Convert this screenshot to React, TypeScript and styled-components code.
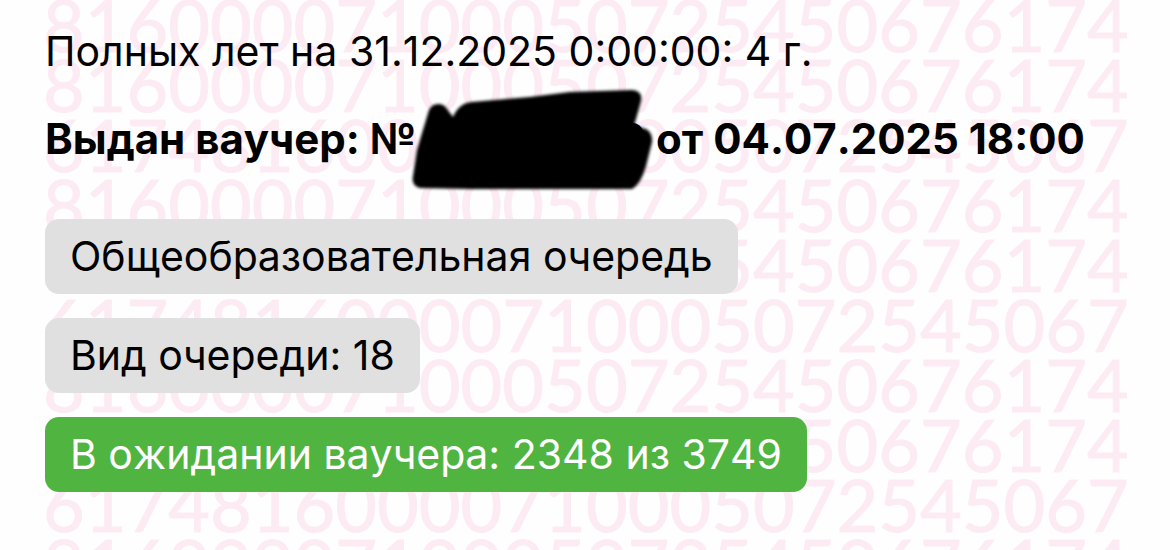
import React from "react";
import styled, { createGlobalStyle } from "styled-components";

const GlobalStyle = createGlobalStyle`
  * { box-sizing: border-box; }
  body {
    margin: 0;
    background: #fefefe;
    color: #000;
    font-family: Inter, "Liberation Sans", sans-serif;
  }
`;

const Page = styled.main`
  position: relative;
  overflow: hidden;
  min-height: 100vh;
  padding: 20px 45px 56px;
  font-size: 41px;
  font-kerning: none;
`;

const Watermark = styled.div`
  position: absolute;
  inset: -6px 43px 0;
  overflow: hidden;
  color: #fdebf4;
  -webkit-text-stroke: 1px #fdebf4;
  font-family: Lato, sans-serif;
  font-size: 72px;
  line-height: 60px;
  white-space: nowrap;
  user-select: none;
`;

const WatermarkRow = styled.div`
  height: 60px;
`;

const Content = styled.div`
  position: relative;
  display: flex;
  flex-direction: column;
  gap: 49px;
`;

const Stack = styled.div`
  display: flex;
  flex-direction: column;
  align-items: flex-start;
  gap: 24px;
`;

const Line = styled.p<{ $bold?: boolean }>`
  display: flex;
  margin: 0;
  font-size: ${(p) => (p.$bold ? 42 : 41)}px;
  font-weight: ${(p) => (p.$bold ? 700 : 400)};
  line-height: 63px;
  white-space: pre;
`;

const Hidden = styled.span`
  position: relative;
  width: 230px;
  text-align: right;
`;

const Scribble = styled.svg`
  position: absolute;
  left: -8px;
  top: -23px;
  width: 250px;
  height: 112px;
`;

const Chip = styled.div<{ $active?: boolean }>`
  padding: 5px 25px;
  border-radius: 14px;
  background: ${(p) => (p.$active ? "#50b440" : "#e0e0e0")};
  color: ${(p) => (p.$active ? "#fff" : "#000")};
  line-height: 65px;
`;

const LONG = "81600007100050725450676174";
const SHIFTED = "61748160000710005072545067";
const rows = Array.from({ length: 10 }, (_, i) => (i % 3 === 2 ? SHIFTED : LONG));

export default function App() {
  return (
    <Page>
      <GlobalStyle />
      <Watermark aria-hidden="true">
        {rows.map((digits, i) => (
          <WatermarkRow key={i}>{digits}</WatermarkRow>
        ))}
      </Watermark>
      <Content>
        <Stack>
          <Line>Полных лет на 31.12.2025 0:00:00: 4 г.</Line>
          <Line $bold>
            <span>Выдан ваучер: №</span>
            <Hidden>
              0
              <Scribble viewBox="408 84 250 112" aria-hidden="true">
                <defs>
                  <filter id="soft" x="-5%" y="-10%" width="110%" height="120%">
                    <feGaussianBlur stdDeviation="1.6" />
                  </filter>
                </defs>
                <path
                  filter="url(#soft)"
                  d="M429 110 Q432 104 438 104 Q444 104 447 109 L453 117 Q459 103 472 102 L530 97 L570 92 L632 90 Q643 91 641 101 L634 126 L646 129 Q653 133 652 142 L646 166 Q641 184 632 189 L470 189 L420 188 Q411 186 413 176 L417 150 Z"
                />
              </Scribble>
            </Hidden>
            <span> от 04.07.2025 18:00</span>
          </Line>
        </Stack>
        <Stack>
          <Chip>Общеобразовательная очередь</Chip>
          <Chip>Вид очереди: 18</Chip>
          <Chip $active>В ожидании ваучера: 2348 из 3749</Chip>
        </Stack>
      </Content>
    </Page>
  );
}
